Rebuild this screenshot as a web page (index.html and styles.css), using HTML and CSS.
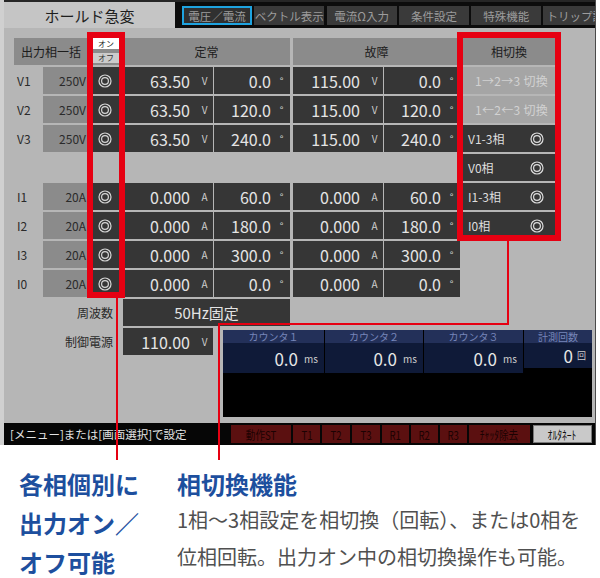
FILE: index.html
```html
<!DOCTYPE html>
<html lang="ja">
<head>
<meta charset="utf-8">
<title>ホールド急変</title>
<link rel="stylesheet" href="styles.css">
</head>
<body>
<svg class="defs" width="0" height="0" aria-hidden="true"><symbol id="ring" viewBox="0 0 14 14"><circle cx="7" cy="7" r="6" fill="none" stroke="currentColor" stroke-width="1.2"/><circle cx="7" cy="7" r="3.4" fill="none" stroke="currentColor" stroke-width="1.2"/></symbol></svg>
<div class="page">
  <div class="screen">
    <div class="topbar">
      <div class="title">ホールド急変</div>
      <div class="tabs">
        <div class="tab sel">電圧／電流</div>
        <div class="tab">ベクトル表示</div>
        <div class="tab">電流Ω入力</div>
        <div class="tab">条件設定</div>
        <div class="tab">特殊機能</div>
        <div class="tab last">トリップ設定</div>
      </div>
    </div>

    <div class="main">
      <div class="row">
        <div class="hd bulk">出力相一括</div>
        <div class="onoff"><span class="btn on">オン</span><span class="btn off">オフ</span></div>
        <div class="hd g1">定常</div>
        <div class="hd g2">故障</div>
        <div class="hd ph">相切換</div>
      </div>

      <div class="row">
        <div class="lbl">V1</div><div class="rng">250V</div>
        <div class="ico"><svg><use href="#ring"/></svg></div>
        <div class="v val"><span class="num">63.50</span><span class="unit">V</span></div>
        <div class="v ang"><span class="num">0.0</span><span class="unit">°</span></div>
        <div class="v fval"><span class="num">115.00</span><span class="unit">V</span></div>
        <div class="v fang"><span class="num">0.0</span><span class="unit">°</span></div>
        <div class="ph sw">1→2→3 切換</div>
      </div>

      <div class="row">
        <div class="lbl">V2</div><div class="rng">250V</div>
        <div class="ico"><svg><use href="#ring"/></svg></div>
        <div class="v val"><span class="num">63.50</span><span class="unit">V</span></div>
        <div class="v ang"><span class="num">120.0</span><span class="unit">°</span></div>
        <div class="v fval"><span class="num">115.00</span><span class="unit">V</span></div>
        <div class="v fang"><span class="num">120.0</span><span class="unit">°</span></div>
        <div class="ph sw">1←2←3 切換</div>
      </div>

      <div class="row">
        <div class="lbl">V3</div><div class="rng">250V</div>
        <div class="ico"><svg><use href="#ring"/></svg></div>
        <div class="v val"><span class="num">63.50</span><span class="unit">V</span></div>
        <div class="v ang"><span class="num">240.0</span><span class="unit">°</span></div>
        <div class="v fval"><span class="num">115.00</span><span class="unit">V</span></div>
        <div class="v fang"><span class="num">240.0</span><span class="unit">°</span></div>
        <div class="ph pon"><span>V1-3相</span><svg><use href="#ring"/></svg></div>
      </div>

      <div class="row">
        <div class="spacer"></div>
        <div class="ph pon"><span>V0相</span><svg><use href="#ring"/></svg></div>
      </div>

      <div class="row">
        <div class="lbl">I1</div><div class="rng">20A</div>
        <div class="ico"><svg><use href="#ring"/></svg></div>
        <div class="v val"><span class="num">0.000</span><span class="unit">A</span></div>
        <div class="v ang"><span class="num">60.0</span><span class="unit">°</span></div>
        <div class="v fval"><span class="num">0.000</span><span class="unit">A</span></div>
        <div class="v fang"><span class="num">60.0</span><span class="unit">°</span></div>
        <div class="ph pon"><span>I1-3相</span><svg><use href="#ring"/></svg></div>
      </div>

      <div class="row">
        <div class="lbl">I2</div><div class="rng">20A</div>
        <div class="ico"><svg><use href="#ring"/></svg></div>
        <div class="v val"><span class="num">0.000</span><span class="unit">A</span></div>
        <div class="v ang"><span class="num">180.0</span><span class="unit">°</span></div>
        <div class="v fval"><span class="num">0.000</span><span class="unit">A</span></div>
        <div class="v fang"><span class="num">180.0</span><span class="unit">°</span></div>
        <div class="ph pon"><span>I0相</span><svg><use href="#ring"/></svg></div>
      </div>

      <div class="row">
        <div class="lbl">I3</div><div class="rng">20A</div>
        <div class="ico"><svg><use href="#ring"/></svg></div>
        <div class="v val"><span class="num">0.000</span><span class="unit">A</span></div>
        <div class="v ang"><span class="num">300.0</span><span class="unit">°</span></div>
        <div class="v fval"><span class="num">0.000</span><span class="unit">A</span></div>
        <div class="v fang"><span class="num">300.0</span><span class="unit">°</span></div>
      </div>

      <div class="row">
        <div class="lbl">I0</div><div class="rng">20A</div>
        <div class="ico"><svg><use href="#ring"/></svg></div>
        <div class="v val"><span class="num">0.000</span><span class="unit">A</span></div>
        <div class="v ang"><span class="num">0.0</span><span class="unit">°</span></div>
        <div class="v fval"><span class="num">0.000</span><span class="unit">A</span></div>
        <div class="v fang"><span class="num">0.0</span><span class="unit">°</span></div>
      </div>

      <div class="row">
        <div class="flabel">周波数</div>
        <div class="fixed">50Hz固定</div>
      </div>

      <div class="row ctrl">
        <div class="flabel">制御電源</div>
        <div class="v val"><span class="num">110.00</span><span class="unit">V</span></div>
        <div class="counter">
          <div class="ch">カウンタ１</div>
          <div class="ch">カウンタ２</div>
          <div class="ch">カウンタ３</div>
          <div class="ch">計測回数</div>
          <div class="cv"><span class="cn">0.0</span><span class="cu">ms</span></div>
          <div class="cv"><span class="cn">0.0</span><span class="cu">ms</span></div>
          <div class="cv"><span class="cn">0.0</span><span class="cu">ms</span></div>
          <div class="cv cnt"><span class="cn">0</span><span class="cu kai">回</span></div>
        </div>
      </div>
    </div>

    <div class="status">
      <div class="msg">[メニュー]または[画面選択]で設定</div>
      <div class="keys">
        <div class="key k60"><span>動作ST</span></div>
        <div class="key k27"><span>T1</span></div>
        <div class="key k28"><span>T2</span></div>
        <div class="key k28"><span>T3</span></div>
        <div class="key k27"><span>R1</span></div>
        <div class="key k27"><span>R2</span></div>
        <div class="key k27"><span>R3</span></div>
        <div class="key k61"><span>ﾁｬｯﾀ除去</span></div>
        <div class="key alt"><span>ｵﾙﾀﾈｰﾄ</span></div>
      </div>
    </div>
  </div>

  <div class="notes">
    <div class="note-l">各相個別に<br>出力オン／<br>オフ可能</div>
    <div class="note-r">
      <div class="nt">相切換機能</div>
      <p class="nd">1相～3相設定を相切換（回転）、または0相を<br>位相回転。出力オン中の相切換操作も可能。</p>
    </div>
  </div>

  <div class="mark box-a"></div>
  <div class="mark box-b"></div>
  <div class="line la"></div>
  <div class="line lb"></div>
  <div class="line lc"></div>
  <div class="line ld"></div>
</div>
</body>
</html>
```

FILE: styles.css
```css
* { box-sizing: border-box; margin: 0; padding: 0; }
body { background: #fff; font-family: "Noto Sans CJK JP", "Noto Sans", sans-serif; }
.defs { position: absolute; width: 0; height: 0; }
.page { position: relative; width: 600px; height: 578px; overflow: hidden; }

.screen { width: 596px; border-left: 4px solid #d0d0d0; border-right: 1px solid #4a4a4a; background: #b6b6b6; }

.topbar { display: flex; height: 28px; border-top: 2px solid #262626; }
.title { width: 171px; background: #c5c5c5; color: #1e1e1e; font-size: 15px; display: flex; align-items: center; justify-content: center; }
.tabs { flex: 1; background: #0c0c0c; display: flex; gap: 2.3px; padding: 4px 0 0 7px; overflow: hidden; }
.tab { flex: none; width: 70px; height: 19px; background: #3a3a3a; color: #9c9c9c; font-size: 11.5px; display: flex; align-items: center; justify-content: center; white-space: nowrap; overflow: hidden; }
.tab.sel { border: 2px solid #1ea3e0; background: #303030; }
.tab.last { justify-content: flex-start; padding-left: 3px; }

.main { padding: 10px 0 6px 10px; }
.row { display: flex; height: 27px; margin-bottom: 2px; }
.row.ctrl { height: auto; margin-bottom: 0; align-items: flex-start; }

.hd { background: #8b8b8b; color: #1c1c1c; font-size: 12px; display: flex; align-items: center; justify-content: center; }
.bulk { width: 74px; }
.g1 { width: 167px; margin-left: 1px; }
.g2 { width: 167px; margin-left: 3px; }
.onoff { width: 34px; background: #8b8b8b; display: flex; flex-direction: column; padding-left: 5px; }
.btn { width: 26px; font-size: 8px; line-height: 1; display: flex; align-items: center; justify-content: center; }
.btn.on { height: 11px; background: #fff; color: #222; }
.btn.off { height: 10px; margin-top: 4px; background: #cbcbcb; color: #333; }

.lbl { width: 29px; padding-left: 3px; font-size: 12px; color: #2a2a2a; display: flex; align-items: center; }
.rng { width: 45px; background: #8b8b8b; padding-right: 2px; font-size: 12px; color: #2a2a2a; display: flex; align-items: center; justify-content: flex-end; }
.ico { width: 34px; background: #363636; color: #d6d6d6; display: flex; align-items: center; justify-content: center; }
.ico svg, .pon svg { width: 14px; height: 14px; }

.v { height: 27px; background: #363636; display: flex; align-items: center; justify-content: flex-end; }
.val { width: 90px; margin-left: 1px; }
.ang { width: 76px; margin-left: 1px; }
.fval { width: 90px; margin-left: 3px; }
.fang { width: 76px; margin-left: 1px; }
.num { font-size: 16px; color: #e4e4e4; }
.unit { width: 17px; text-align: center; font-size: 10px; color: #cfcfcf; }
.val .num, .fval .num { margin-right: 6px; }
.ang .num, .fang .num { margin-right: 2px; }

.spacer { width: 446px; }
.ph { width: 94px; margin-left: 2px; font-size: 12px; display: flex; align-items: center; }
.ph.sw { background: #a5a5a5; color: #d2d2d2; justify-content: flex-end; padding-right: 8px; letter-spacing: 0.3px; }
.ph.pon { background: #363636; color: #dedede; justify-content: space-between; padding: 0 12px 0 6px; }

.flabel { width: 108px; height: 27px; padding-right: 9px; font-size: 12px; color: #2a2a2a; display: flex; align-items: center; justify-content: flex-end; }
.fixed { width: 167px; margin-left: 1px; background: #363636; color: #e4e4e4; font-size: 15px; display: flex; align-items: center; justify-content: center; }

.counter { margin: 2px 0 0 10px; width: 369px; height: 87px; background: #000; display: grid; grid-template-columns: 101px 98px 99px 1fr; grid-template-rows: 13px 30px; column-gap: 1px; align-content: start; }
.ch { background: #233059; color: #7786b9; font-size: 10px; line-height: 1; display: flex; align-items: center; justify-content: center; }
.cv { background: #0f1a38; display: flex; align-items: center; justify-content: flex-end; padding-right: 6px; }
.cv.cnt { height: 25px; align-self: start; }
.cn { font-size: 17px; color: #e6e6e6; }
.cu { font-size: 10px; color: #cfcfcf; margin-left: 6px; }
.cu.kai { font-size: 9px; margin-left: 4px; }

.status { height: 22px; background: #060606; display: flex; align-items: center; padding: 0 3px 0 6px; }
.msg { flex: 1; font-size: 11.5px; color: #e2e2e2; white-space: nowrap; }
.keys { display: flex; gap: 2px; }
.key { height: 18px; background: #5b1010; color: #1c0202; font-size: 12px; display: flex; align-items: center; justify-content: center; white-space: nowrap; overflow: hidden; }
.key span { display: inline-block; transform: scaleX(0.8); }
.k60 { width: 60px; }
.k61 { width: 61px; }
.k27 { width: 27px; }
.k28 { width: 28px; }
.key.alt { width: 59px; margin-left: 1px; background: #c9c9c9; color: #111; border: 1px solid #7a7a7a; }

.notes { display: flex; padding: 19px 0 0 19px; }
.note-l { width: 158px; color: #1d4f9e; font-size: 24px; font-weight: 700; line-height: 39px; white-space: nowrap; }
.nt { color: #1d4f9e; font-size: 24px; font-weight: 700; line-height: 39px; }
.nd { margin-top: -2px; font-size: 20px; line-height: 37px; color: #505050; white-space: nowrap; }

.mark { position: absolute; border: 6px solid #e60012; }
.box-a { left: 87px; top: 32px; width: 38px; height: 266px; }
.box-b { left: 457px; top: 32px; width: 104px; height: 209px; }
.line { position: absolute; background: #e60012; }
.la { left: 116px; top: 298px; width: 2px; height: 162px; }
.lb { left: 507px; top: 241px; width: 2px; height: 84px; }
.lc { left: 218px; top: 323px; width: 291px; height: 2px; }
.ld { left: 218px; top: 323px; width: 2px; height: 137px; }
```
